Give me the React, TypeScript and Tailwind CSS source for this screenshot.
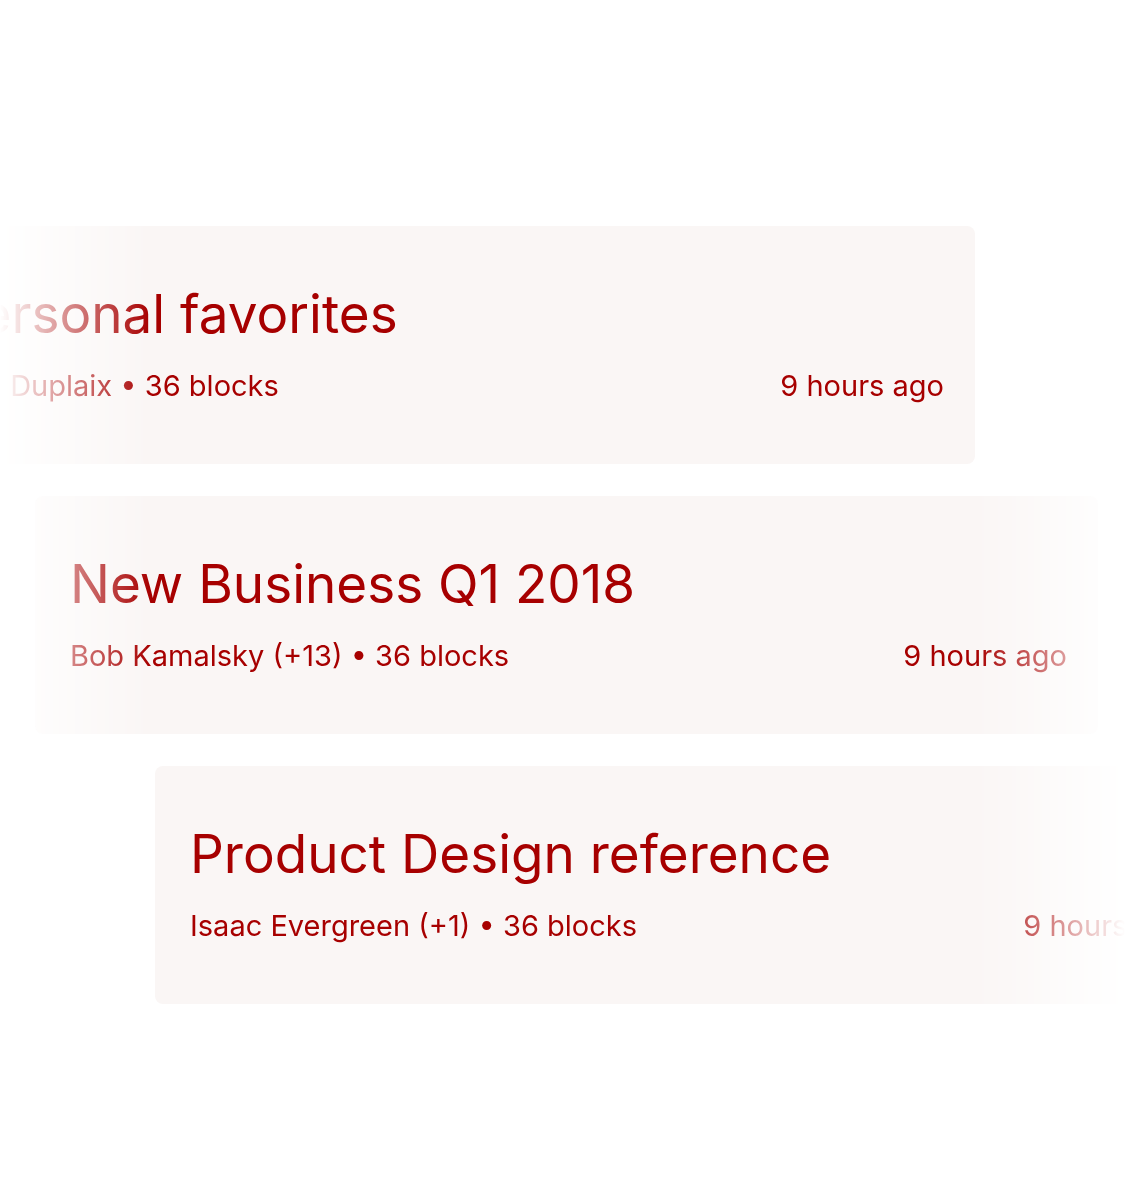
import React from "react";

type Item = { title: string; people: string; blocks: string; time: string; offset: string };

const items: Item[] = [
  { title: "Personal favorites", people: "Lisa Duplaix", blocks: "36 blocks", time: "9 hours ago", offset: "ml-[-88px]" },
  { title: "New Business Q1 2018", people: "Bob Kamalsky (+13)", blocks: "36 blocks", time: "9 hours ago", offset: "ml-[35px]" },
  { title: "Product Design reference", people: "Isaac Evergreen (+1)", blocks: "36 blocks", time: "9 hours ago", offset: "ml-[155px]" },
];

function Card({ item }: { item: Item }) {
  return (
    <div
      className={`${item.offset} w-[1063px] h-[238px] shrink-0 rounded-lg bg-[#faf6f5] pl-[35px] pr-[31px] pt-[56px] flex flex-col gap-[22px]`}
    >
      <div className="text-[53px] leading-[64px] text-[#a70000] whitespace-nowrap">{item.title}</div>
      <div className="flex justify-between text-[29px] leading-[35px] text-[#a70000] whitespace-nowrap">
        <span>
          {item.people} • {item.blocks}
        </span>
        <span>{item.time}</span>
      </div>
    </div>
  );
}

export default function App() {
  return (
    <div
      className="w-[1125px] h-[1200px] bg-white overflow-hidden"
      style={{ fontFamily: "Inter, 'Noto Sans', sans-serif" }}
    >
      <div className="w-[1125px] pt-[226px] flex flex-col gap-[32px] overflow-hidden [mask-image:linear-gradient(to_right,transparent_0px,black_150px,black_975px,transparent_1125px)] [-webkit-mask-image:linear-gradient(to_right,transparent_0px,black_150px,black_975px,transparent_1125px)]">
        {items.map((it) => (
          <Card key={it.title} item={it} />
        ))}
      </div>
    </div>
  );
}
